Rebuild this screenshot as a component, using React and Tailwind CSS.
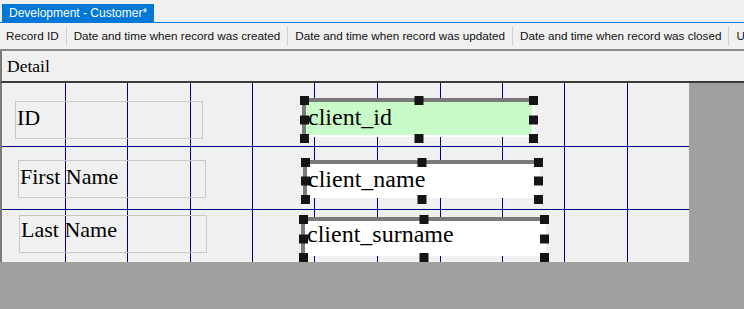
const columns = [
  "Record ID",
  "Date and time when record was created",
  "Date and time when record was updated",
  "Date and time when record was closed",
  "User",
];

const labels = [
  { text: "ID", box: "left-[13px] top-[18px]", txt: "top-[5px]" },
  { text: "First Name", box: "left-[16px] top-[77px]", txt: "top-[5px]" },
  { text: "Last Name", box: "left-[17px] top-[132px]", txt: "top-[3px]" },
];

const fields = [
  {
    text: "client_id",
    pos: "left-[298px] top-[13px] w-[238px] h-[47px]",
    bg: "bg-[#c9fbc9]",
    txt: "left-[8px] top-[9px]",
  },
  {
    text: "client_name",
    pos: "left-[299px] top-[75px] w-[242px] h-[46px]",
    bg: "bg-white",
    txt: "left-[7px] top-[9px]",
  },
  {
    text: "client_surname",
    pos: "left-[297px] top-[132px] w-[250px] h-[47px]",
    bg: "bg-white",
    txt: "left-[8px] top-[7px]",
  },
];

const handles = [
  "left-0 top-0",
  "left-1/2 -translate-x-1/2 top-0",
  "right-0 top-0",
  "left-0 top-1/2 -translate-y-1/2",
  "right-0 top-1/2 -translate-y-1/2",
  "left-0 bottom-0",
  "left-1/2 -translate-x-1/2 bottom-0",
  "right-0 bottom-0",
];

const vLines = [63, 125, 188, 250, 312, 375, 438, 500, 562, 625];
const hLines = [63, 126];

function Field({ f }) {
  return (
    <div className={`absolute ${f.pos}`}>
      <div
        className={`absolute left-[2px] top-[2px] right-[3px] bottom-[6px] ${f.bg} border-l-4 border-t-4 border-r-[3px] border-b-2 border-l-[#7a7a7a] border-t-[#7a7a7a] border-r-white border-b-white`}
      />
      {handles.map((h) => (
        <div key={h} className={`absolute ${h} w-[9px] h-[9px] bg-[#151515]`} />
      ))}
      <span
        className={`absolute ${f.txt} text-[24px] leading-none text-black whitespace-nowrap font-['Liberation_Serif',serif]`}
      >
        {f.text}
      </span>
    </div>
  );
}

export default function App() {
  return (
    <div className="w-[744px] h-[309px] overflow-hidden bg-[#a0a0a0] flex flex-col font-['Liberation_Sans',sans-serif]">
      {/* tab strip */}
      <div className="h-[22px] bg-[#f0f0f0] flex items-end pl-[2px]">
        <div className="h-[18px] px-[7px] bg-[#0078d7] text-white text-[12px] leading-[18px]">
          Development - Customer*
        </div>
      </div>
      <div className="h-px bg-[#0078d7]" />

      {/* column headers */}
      <div className="h-[26px] bg-[#f0f0f0] flex items-start pt-[3px] overflow-hidden whitespace-nowrap">
        {columns.map((c) => (
          <div
            key={c}
            className="h-[20px] px-[7px] first:pl-[6px] border-r border-[#d2d2d2] text-[11.7px] leading-[20px] text-[#111]"
          >
            {c}
          </div>
        ))}
      </div>

      {/* designer area */}
      <div className="flex-1 flex flex-col border-t-2 border-[#8a8a8a]">
        <div className="h-[32px] bg-[#f0f0f0] border-l-2 border-b-2 border-l-[#7a7a7a] border-b-[#3a3a3a] pl-[5px] pt-[7px]">
          <span className="block text-[17.5px] leading-none text-black font-['Liberation_Serif',serif]">
            Detail
          </span>
        </div>

        <div className="flex">
          <div className="w-[2px] bg-[#7a7a7a]" />
          <div className="relative w-[687px] h-[179px] bg-[#f0f0f0] overflow-hidden">
            <svg className="absolute inset-0" width="687" height="179" shapeRendering="crispEdges">
              {vLines.map((x) => (
                <rect key={`v${x}`} x={x} y={0} width={1} height={179} fill="#000080" />
              ))}
              {hLines.map((y) => (
                <rect key={`h${y}`} x={0} y={y} width={687} height={1} fill="#000080" />
              ))}
            </svg>

            {labels.map((l) => (
              <div
                key={l.text}
                className={`absolute ${l.box} w-[188px] h-[38px] border border-[#c8c8c8]`}
              >
                <span
                  className={`absolute left-[1px] ${l.txt} text-[22px] leading-none text-black whitespace-nowrap font-['Liberation_Serif',serif]`}
                >
                  {l.text}
                </span>
              </div>
            ))}

            {fields.map((f) => (
              <Field key={f.text} f={f} />
            ))}
          </div>
        </div>
      </div>
    </div>
  );
}
